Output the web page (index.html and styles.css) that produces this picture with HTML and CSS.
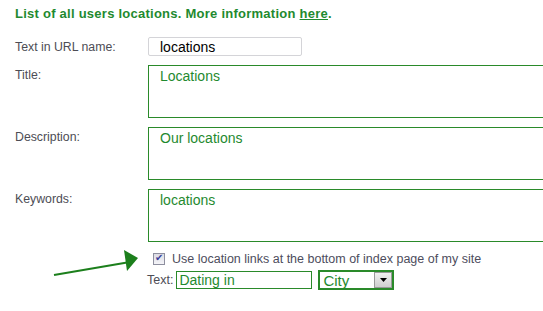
FILE: index.html
```html
<!DOCTYPE html>
<html lang="en">
<head>
    <meta charset="UTF-8">
    <title>Locations settings</title>
    <link rel="stylesheet" href="styles.css">
</head>
<body>
    <div class="page">
        <p class="intro">List of all users locations. More information <a href="#">here</a>.</p>

        <div class="row">
            <label for="url">Text in URL name:</label>
            <input type="text" id="url" class="url-input" value="locations">
        </div>
        <div class="row">
            <label for="title">Title:</label>
            <textarea id="title">Locations</textarea>
        </div>
        <div class="row">
            <label for="desc">Description:</label>
            <textarea id="desc">Our locations</textarea>
        </div>
        <div class="row">
            <label for="keys">Keywords:</label>
            <textarea id="keys">locations</textarea>
        </div>

        <div class="links">
            <svg class="arrow" width="100" height="30" viewBox="0 0 100 30">
                <line x1="2" y1="26" x2="78" y2="13" stroke="#1c7f1c" stroke-width="2"/>
                <polygon points="72,1 86,9 75,22" fill="#1c7f1c"/>
            </svg>
            <div class="check-line">
                <input type="checkbox" id="uselinks" checked>
                <label for="uselinks">Use location links at the bottom of index page of my site</label>
            </div>
            <div class="text-line">
                <label for="linktext">Text:</label>
                <input type="text" id="linktext" class="link-input" value="Dating in">
                <div class="select">
                    <span class="select-value">City</span>
                    <span class="select-btn">
                        <svg width="7" height="4" viewBox="0 0 7 4"><polygon points="0,0 7,0 3.5,4" fill="#000"/></svg>
                    </span>
                </div>
            </div>
        </div>
    </div>
</body>
</html>
```

FILE: styles.css
```css
body {
    margin: 0;
    font-family: "Liberation Sans", Arial, sans-serif;
    background: #fff;
    overflow: hidden;
}
.page {
    padding: 6px 0 0 15px;
    width: 600px;
}
.intro {
    margin: 0 0 16px 0;
    font-size: 13px;
    font-weight: bold;
    letter-spacing: 0.25px;
    color: #1f8a2f;
}
.intro a {
    color: #1f8a2f;
    text-decoration: underline;
}
.row {
    display: flex;
    align-items: flex-start;
    margin-bottom: 9px;
}
.row label {
    width: 133px;
    font-size: 12.3px;
    color: #4d4d55;
    padding-top: 3px;
}
.url-input {
    box-sizing: border-box;
    width: 154px;
    height: 19px;
    margin: 0;
    padding: 0 0 0 11px;
    border: 1px solid #d4d4d8;
    border-radius: 2px;
    font-family: "Liberation Sans", Arial, sans-serif;
    font-size: 14px;
    color: #000;
}
textarea {
    box-sizing: border-box;
    width: 420px;
    height: 53px;
    margin: 0;
    padding: 2px 11px;
    border: 1px solid #2a8a2a;
    border-radius: 0;
    resize: none;
    font-family: "Liberation Sans", Arial, sans-serif;
    font-size: 14px;
    color: #1f8a2f;
}
.links {
    position: relative;
    padding: 1px 0 0 132px;
}
.arrow {
    position: absolute;
    left: 37px;
    top: -2px;
}
.check-line {
    display: flex;
    align-items: center;
    padding-left: 6px;
}
.check-line input {
    appearance: none;
    box-sizing: border-box;
    width: 12px;
    height: 12px;
    margin: 0 7px 0 0;
    border: 1px solid #8e8f9f;
    background: linear-gradient(#dcdce4, #f4f4f8);
    position: relative;
}
.check-line input:checked::after {
    content: "\2714";
    position: absolute;
    left: 1px;
    top: -2px;
    font-size: 10px;
    color: #3b3f9a;
}
.check-line label {
    font-size: 12.5px;
    color: #4d4d5d;
}
.text-line {
    display: flex;
    align-items: center;
    margin-top: 4px;
}
.text-line label {
    font-size: 12.5px;
    color: #4d4d55;
    margin-right: 3px;
}
.link-input {
    box-sizing: border-box;
    width: 136px;
    height: 18px;
    margin: 0 6px 0 0;
    padding: 0 0 0 2px;
    border: 1px solid #2a8a2a;
    font-family: "Liberation Sans", Arial, sans-serif;
    font-size: 14px;
    color: #1f8a2f;
}
.select {
    box-sizing: border-box;
    display: flex;
    align-items: center;
    justify-content: space-between;
    width: 76px;
    height: 20px;
    border: 2px solid #2a8a2a;
    padding-left: 3px;
}
.select-value {
    font-size: 15px;
    color: #1f8a2f;
}
.select-btn {
    display: flex;
    align-items: center;
    justify-content: center;
    width: 18px;
    height: 16px;
    background: linear-gradient(#f0f0f0, #cfcfcf);
    border: 1px solid #999;
    box-sizing: border-box;
}
```
